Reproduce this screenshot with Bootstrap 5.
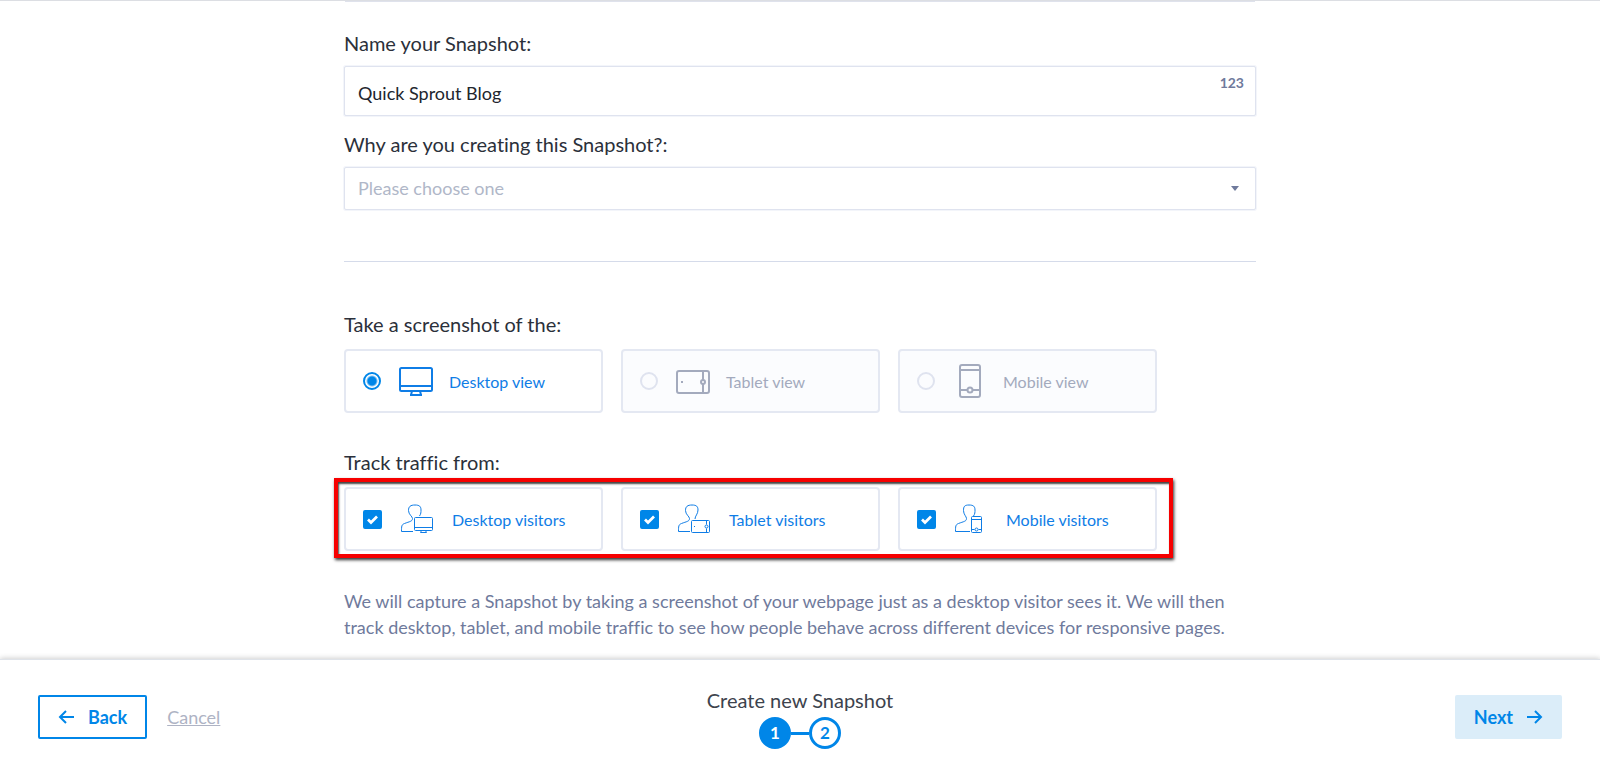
<!DOCTYPE html>
<html lang="en">
<head>
<meta charset="utf-8">
<meta name="viewport" content="width=device-width, initial-scale=1">
<title>Create new Snapshot</title>
<link href="https://cdn.jsdelivr.net/npm/bootstrap@5.3.0/dist/css/bootstrap.min.css" rel="stylesheet">
<style>
  :root { --blue: #0086e8; --line: #dfe3ef; --slate: #6f7a9c; --muted: #a3aabd; }
  body { font-family: Lato, sans-serif; font-size: 18px; line-height: 26px; color: #2b303a; background: #fff; font-variant-ligatures: none; }
  main { border-top: 1px solid #dcdee3; }
  .form-column { width: 100%; max-width: 912px; }
  .previous-field { height: 1px; background: #dfe2ec; margin: 0 1px 26px; }
  .field-title { display: block; font-size: 20px; line-height: 30px; margin: 0 0 8px; }
  .field-title.next-field { margin-top: 13px; }
  legend.field-title { margin-bottom: 10px; }
  .field-box, .field-box:focus { border: 1px solid var(--line); border-radius: 2px; box-shadow: 0 0 0 1px #f3f5fa; color: #22262e; font-size: 18px; padding: 0 13px; }
  .name-box, .name-box:focus { height: 50px; padding: 4px 60px 0 13px; }
  .reason-box, .reason-box:focus { height: 43px; color: #b0b7c8; padding-right: 40px;
    background-image: url("data:image/svg+xml,%3csvg xmlns='http://www.w3.org/2000/svg' viewBox='0 0 8 5'%3e%3cpath fill='%236f7a9c' d='M0 0h8L4 5z'/%3e%3c/svg%3e");
    background-size: 8px 5px; background-position: right 16px center; }
  .count { top: 4px; right: 12px; font-size: 14px; font-weight: 700; color: var(--slate); }
  .divider { border-top: 1px solid #d5dbea; opacity: 1; margin: 51px 0 47px; }
  .choices, .marked { max-width: 813px; }
  .choices { display: grid; grid-template-columns: repeat(auto-fit, minmax(220px, 1fr)); gap: 18px; }
  .choice { height: 64px; padding: 0 17px; gap: 18px; border: 2px solid #e4e8f2; border-radius: 4px; font-size: 16px; color: #0f7de6; cursor: pointer; }
  .choice.off { background: #fbfcfe; color: var(--muted); }
  .choice span { padding-top: 2px; }
  .choice svg { width: 34px; height: 34px; flex: none; fill: none; stroke: currentColor; stroke-width: 2; }
  .choice .device { margin-right: -2px; }
  .choice .visitor { stroke-width: 1; }
  .choice .form-check-input { width: 18px; height: 18px; margin: 0; flex: none; background-color: transparent; border: 2px solid var(--line); }
  .choice .form-check-input:checked { border-color: var(--blue); }
  .choice [type=radio]:checked { background-image: radial-gradient(circle, var(--blue) 4px, transparent 6px); }
  .choice [type=checkbox] { width: 19px; height: 19px; border-radius: 2px; }
  .choice [type=checkbox]:checked { background-color: var(--blue);
    background-image: url("data:image/svg+xml,%3csvg xmlns='http://www.w3.org/2000/svg' viewBox='0 0 20 20'%3e%3cpath fill='none' stroke='%23fff' stroke-width='3.6' d='M4 10l4 4 8-8'/%3e%3c/svg%3e"); }
  .track { margin-top: 34px; }
  .marked::after { content: ""; position: absolute; inset: -9px -16px -7px -10px; border: 4px solid #f60000; box-shadow: 1px 2px 3px #333, inset 1px 2px 2px #444; pointer-events: none; }
  .note { color: var(--slate); margin: 37px 0 12px; }
  footer { padding: 25px 38px 21px; border-top: 1px solid #dfe3e9; box-shadow: 0 -1px 5px #00000030; background: #fff; }
  .step-btn, .step-btn:hover { height: 44px; border-radius: 2px; border: 2px solid var(--blue); color: var(--blue); font-size: 18px; font-weight: 700; padding: 0 18px; gap: 13px; }
  .step-btn.next { background: #dbedf9; border-color: #dbedf9; padding: 0 17px; }
  .step-btn svg { width: 17px; height: 16px; fill: none; stroke: currentColor; stroke-width: 2; }
  .cancel { color: #aeb3c4; margin-left: 20px; }
  .wizard-title { font-size: 20px; line-height: 30px; margin-bottom: 2px; color: #3d434d; }
  .dot { width: 32px; height: 32px; border: 3px solid var(--blue); border-radius: 50%; color: var(--blue); font-size: 17px; font-weight: 700; }
  .dot.now { background: var(--blue); color: #fff; }
  .link-line { width: 18px; height: 3px; background: var(--blue); }
</style>
</head>
<body class="d-flex flex-column min-vh-100">
<main class="flex-grow-1">
  <form class="form-column mx-auto">
    <div class="previous-field"></div>

    <label class="field-title" for="name">Name your Snapshot:</label>
    <div class="position-relative">
      <input class="form-control field-box name-box" id="name" type="text" value="Quick Sprout Blog">
      <span class="count position-absolute">123</span>
    </div>

    <label class="field-title next-field" for="reason">Why are you creating this Snapshot?:</label>
    <select class="form-select field-box reason-box" id="reason"><option>Please choose one</option></select>

    <hr class="divider">

    <fieldset>
      <legend class="field-title">Take a screenshot of the:</legend>
      <div class="choices">
        <label class="choice d-flex align-items-center">
          <input class="form-check-input" type="radio" name="view" checked>
          <svg class="device" viewBox="0 0 34 34"><rect x="1" y="4" width="32" height="23" rx="1.5"/><path d="M1 22h32M13 27l-1 4M21 27l1 4M11 31h12"/></svg>
          <span>Desktop view</span>
        </label>
        <label class="choice off d-flex align-items-center">
          <input class="form-check-input" type="radio" name="view">
          <svg class="device" viewBox="0 0 34 34"><rect x="1" y="7" width="32" height="22" rx="2"/><path d="M27 7v9M27 20v9"/><circle cx="27" cy="18" r="2"/><path d="M5 18h2"/></svg>
          <span>Tablet view</span>
        </label>
        <label class="choice off d-flex align-items-center">
          <input class="form-check-input" type="radio" name="view">
          <svg class="device" viewBox="0 0 34 34"><rect x="7" y="1" width="20" height="32" rx="2"/><path d="M7 6h20M7 26h7M20 26h7"/><circle cx="17" cy="26" r="2.5"/></svg>
          <span>Mobile view</span>
        </label>
      </div>
    </fieldset>

    <fieldset class="track">
      <legend class="field-title">Track traffic from:</legend>
      <div class="marked position-relative">
        <div class="choices">
          <label class="choice d-flex align-items-center">
            <input class="form-check-input" type="checkbox" checked>
            <svg class="visitor" viewBox="0 0 34 34"><path d="M13 29.500H1.500c0-5 0-7 3-8 5-2 8-2 8-5 0-2-4-4-4-8 0-4 2-5.500 6.500-5.500s6 1.500 6 5c0 2 0 4-1.500 6"/><rect x="14.500" y="15.500" width="18" height="13" rx="1"/><path d="M14.500 25.500h18M21.500 28.500l-1 2h6l-1-2"/></svg>
            <span>Desktop visitors</span>
          </label>
          <label class="choice d-flex align-items-center">
            <input class="form-check-input" type="checkbox" checked>
            <svg class="visitor" viewBox="0 0 34 34"><path d="M13 29.500H1.500c0-5 0-7 3-8 5-2 8-2 8-5 0-2-4-4-4-8 0-4 2-5.500 6.500-5.500s6 1.500 6 5c0 4-3 6-3 9"/><rect x="14.500" y="18.500" width="18" height="12" rx="1"/><path d="M29.500 18.500v4M29.500 26.500v4M17 24.500h1"/><circle cx="29.500" cy="24.500" r="1.500"/></svg>
            <span>Tablet visitors</span>
          </label>
          <label class="choice d-flex align-items-center">
            <input class="form-check-input" type="checkbox" checked>
            <svg class="visitor" viewBox="0 0 34 34"><path d="M16 29.500H1.500c0-5 0-7 3-8 5-2 8-2 8-5 0-2-3-4-3-8 0-4 1-5.500 5.500-5.500s6 1.500 6 5c0 2 0 4-1.500 6"/><rect x="17.500" y="14.500" width="10" height="16" rx="1"/><path d="M17.500 17.500h10M17.500 27.500h3M24.500 27.500h3"/><circle cx="22.500" cy="27.500" r="1.500"/></svg>
            <span>Mobile visitors</span>
          </label>
        </div>
      </div>
    </fieldset>

    <p class="note">We will capture a Snapshot by taking a screenshot of your webpage just as a desktop visitor sees it. We will then track desktop, tablet, and mobile traffic to see how people behave across different devices for responsive pages.</p>
  </form>
</main>

<footer class="sticky-bottom">
  <div class="row g-0">
    <div class="col d-flex align-items-center">
      <button class="btn step-btn d-flex align-items-center" type="button"><svg viewBox="0 0 17 16"><path d="M16 8H2M8 2L2 8l6 6"/></svg>Back</button>
      <a class="cancel" href="#">Cancel</a>
    </div>
    <div class="col-auto text-center">
      <div class="wizard-title">Create new Snapshot</div>
      <div class="d-flex align-items-center justify-content-center">
        <span class="dot now d-flex align-items-center justify-content-center">1</span>
        <span class="link-line"></span>
        <span class="dot d-flex align-items-center justify-content-center">2</span>
      </div>
    </div>
    <div class="col d-flex align-items-center justify-content-end">
      <button class="btn step-btn next d-flex align-items-center" type="button">Next<svg viewBox="0 0 17 16"><path d="M1 8h14M9 2l6 6-6 6"/></svg></button>
    </div>
  </div>
</footer>
<script src="https://cdn.jsdelivr.net/npm/bootstrap@5.3.0/dist/js/bootstrap.bundle.min.js"></script>
</body>
</html>
